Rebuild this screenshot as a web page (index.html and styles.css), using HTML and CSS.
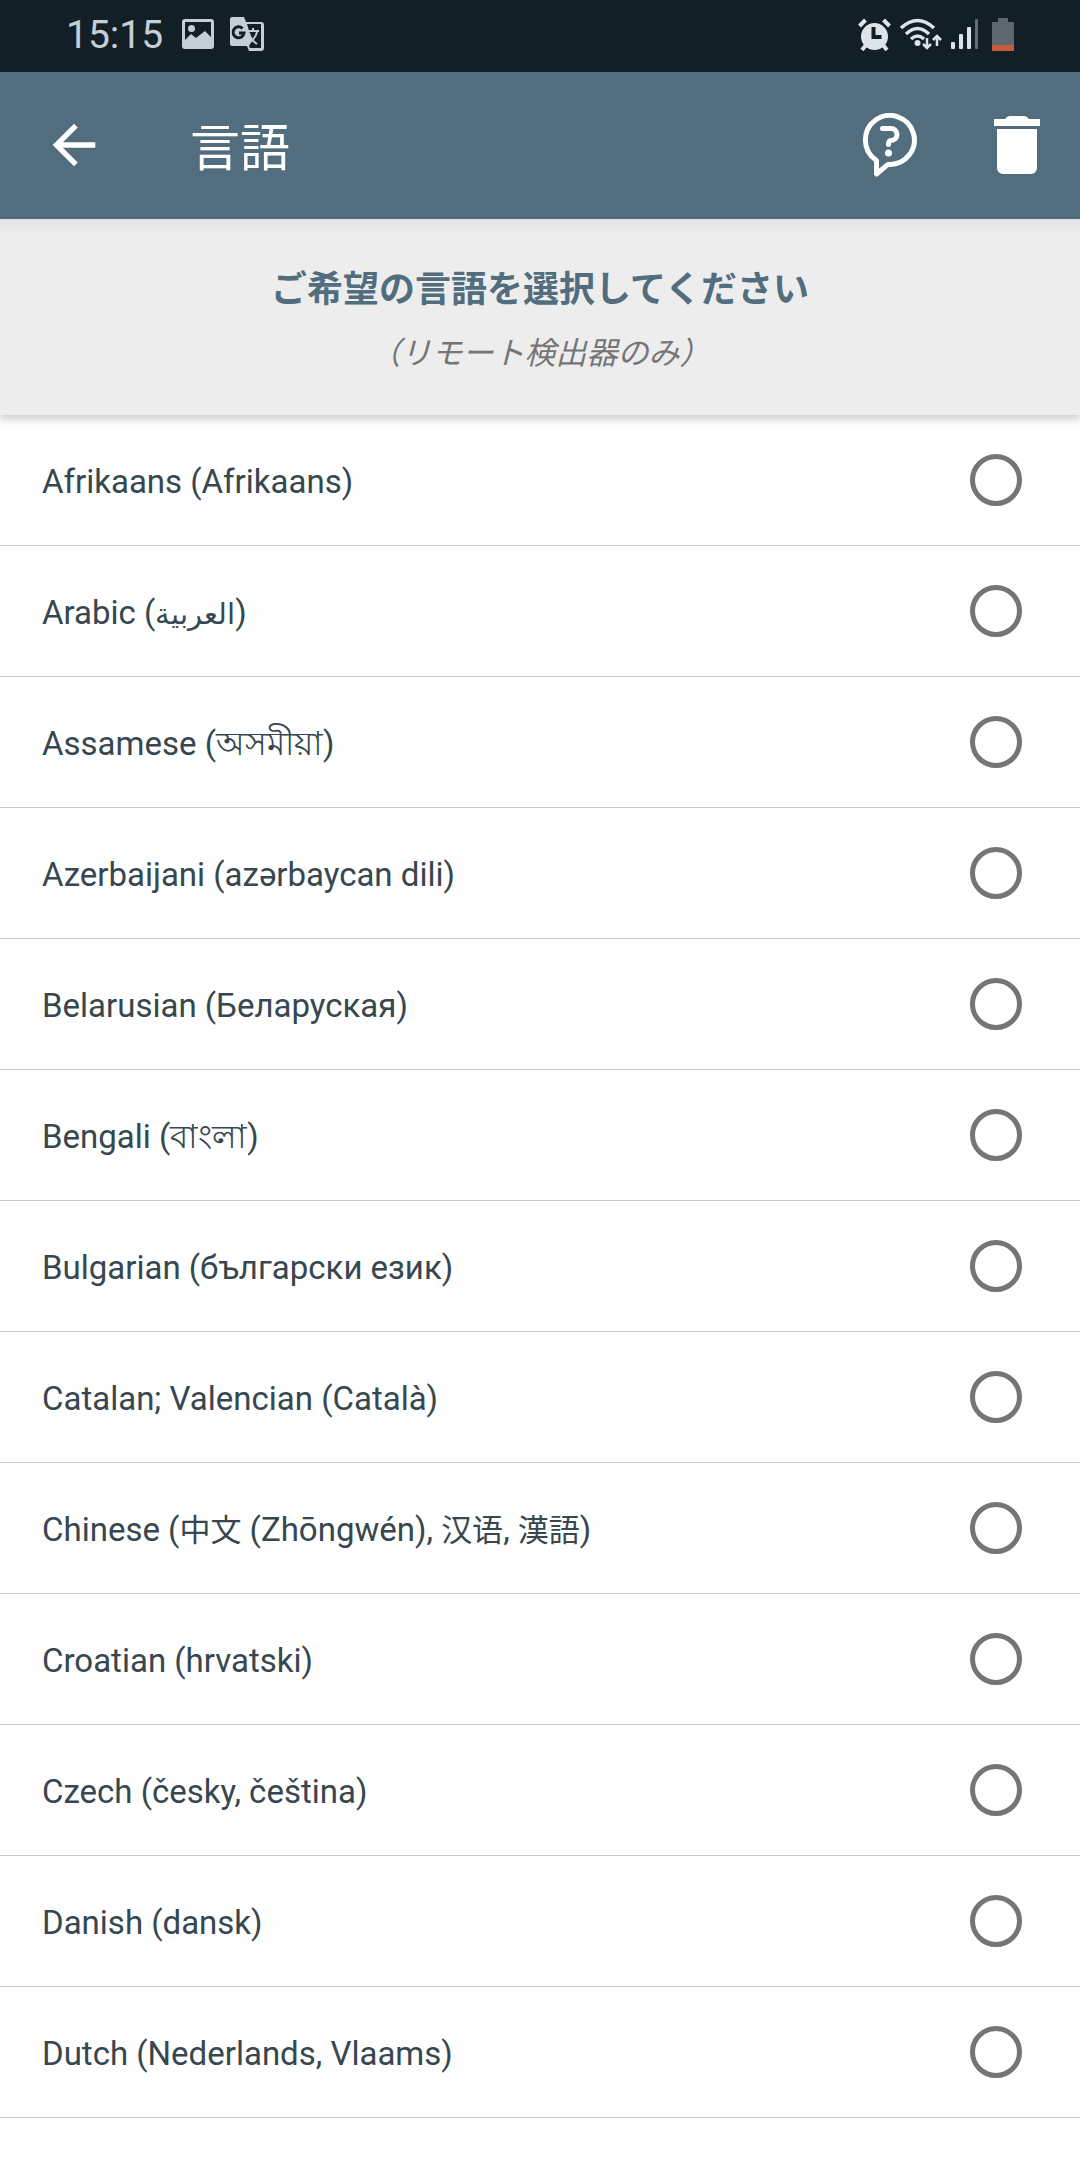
FILE: index.html
```html
<!doctype html>
<html lang="ja">
  <head>
    <meta charset="utf-8">
    <meta name="viewport" content="width=device-width, initial-scale=1">
    <title>言語</title>
    <link rel="stylesheet" href="styles.css">
  </head>
  <body>
    <div class="status-bar">
      <span class="status-time">15:15</span>
      <svg class="status-image" width="32" height="30" viewBox="0 0 32 30">
        <path fill-rule="evenodd" d="M3 0h26a3 3 0 0 1 3 3v24a3 3 0 0 1-3 3H3a3 3 0 0 1-3-3V3a3 3 0 0 1 3-3zM3 3v18l6-6 5 4 9-7 6 6V3z"/>
        <circle cx="9.500" cy="9.500" r="3.500"/>
      </svg>
      <svg class="status-translate" width="34" height="34" viewBox="0 0 34 34">
        <path d="M2 0h12l2 5h15a3 3 0 0 1 3 3v23a3 3 0 0 1-3 3H19l-2-5H2a2 2 0 0 1-2-2V2a2 2 0 0 1 2-2z"/>
        <path fill="#121f27" d="M17 7h14v24H20l-1-2 3-5z"/>
        <path fill="none" stroke="#121f27" stroke-width="3" d="M12.500 11.500a5.500 5.500 0 1 0 1.500 4.500H9"/>
        <path fill="none" stroke="#c6ced5" stroke-width="2" d="M17 14h12M23 11v3M19 16c1 5 5 9 8 11M27 15c-1 5-4 8-8 11"/>
      </svg>
      <div class="status-right">
        <svg width="33" height="33" viewBox="0 0 33 33">
          <circle cx="16.500" cy="18.500" r="13.500"/>
          <path fill="none" stroke="#dde3e8" stroke-width="4" d="M1.500 8l6-6M31.500 8l-6-6M8 27l-4 5M25 27l4 5"/>
          <path fill="none" stroke="#121f27" stroke-width="4" d="M15.500 9v10h8"/>
        </svg>
        <svg width="42" height="33" viewBox="0 0 42 33">
          <g fill="none" stroke="#dde3e8" stroke-width="3.500">
            <path d="M1 10Q17.500-5 34 10M6 16Q17.500 5 29 16M11 21Q17.500 15 24 21"/>
            <path stroke-width="2.500" d="M27 20v10M23 26l4 4 4-4M37 28V18M33 22l4-4 4 4"/>
          </g>
          <circle cx="17.500" cy="25" r="3"/>
        </svg>
        <svg width="28" height="30" viewBox="0 0 28 30">
          <rect x="0" y="23" width="4" height="7" rx="1"/>
          <rect x="8" y="15" width="4" height="15" rx="1"/>
          <rect x="16" y="8" width="4" height="22" rx="1"/>
          <rect x="24" y="0" width="3" height="30" rx="1" fill="#626d75"/>
        </svg>
        <svg class="battery" width="22" height="33" viewBox="0 0 22 33">
          <path fill="#5e6870" d="M6 0h10v4h5a1 1 0 0 1 1 1v22H0V5a1 1 0 0 1 1-1h5z"/>
          <path fill="#c95c38" d="M0 27h22v5a1 1 0 0 1-1 1H1a1 1 0 0 1-1-1z"/>
        </svg>
      </div>
    </div>

    <header class="app-bar">
      <button class="icon-button" type="button" aria-label="戻る">
        <svg width="64" height="64" viewBox="0 0 24 24">
          <path d="M20 11H7.830l5.590-5.590L12 4l-8 8 8 8 1.410-1.410L7.830 13H20z"/>
        </svg>
      </button>
      <h1 class="app-title">言語</h1>
      <button class="icon-button" type="button" aria-label="ヘルプ">
        <svg width="56" height="64" viewBox="0 0 56 64">
          <g fill="none" stroke="#fff" stroke-width="5" stroke-linecap="round" stroke-linejoin="round">
            <path d="M14.500 47.500A24.500 24.500 0 1 1 26 51.400L14.500 61z"/>
            <path d="M20.500 15.500H29a5.500 5.500 0 0 1 0 12c-2 0-2.500 1-2.500 4"/>
          </g>
          <circle cx="26.500" cy="40" r="3.500"/>
        </svg>
      </button>
      <button class="icon-button" type="button" aria-label="削除">
        <svg width="46" height="58" viewBox="0 0 46 58">
          <path d="M0 3h11q2-3 5-3h14q3 0 5 3h11v7H0zM3 13h40v39a6 6 0 0 1-6 6H9a6 6 0 0 1-6-6z"/>
        </svg>
      </button>
    </header>

    <section class="intro">
      <h2 class="intro-title">ご希望の言語を選択してください</h2>
      <p class="intro-note">（リモート検出器のみ）</p>
    </section>

    <main class="languages">
      <label class="language"><span class="language-name">Afrikaans (Afrikaans)</span><input type="radio" name="language" value="af"></label>
      <label class="language"><span class="language-name">Arabic (<bdi class="arabic" lang="ar">العربية</bdi>)</span><input type="radio" name="language" value="ar"></label>
      <label class="language"><span class="language-name">Assamese (অসমীয়া)</span><input type="radio" name="language" value="as"></label>
      <label class="language"><span class="language-name">Azerbaijani (azərbaycan dili)</span><input type="radio" name="language" value="az"></label>
      <label class="language"><span class="language-name">Belarusian (Беларуская)</span><input type="radio" name="language" value="be"></label>
      <label class="language"><span class="language-name">Bengali (বাংলা)</span><input type="radio" name="language" value="bn"></label>
      <label class="language"><span class="language-name">Bulgarian (български език)</span><input type="radio" name="language" value="bg"></label>
      <label class="language"><span class="language-name">Catalan; Valencian (Català)</span><input type="radio" name="language" value="ca"></label>
      <label class="language"><span class="language-name">Chinese (<span class="han">中文</span> (Zhōngwén), <span class="han" lang="zh-Hans">汉语</span>, <span class="han">漢語</span>)</span><input type="radio" name="language" value="zh"></label>
      <label class="language"><span class="language-name">Croatian (hrvatski)</span><input type="radio" name="language" value="hr"></label>
      <label class="language"><span class="language-name">Czech (česky, čeština)</span><input type="radio" name="language" value="cs"></label>
      <label class="language"><span class="language-name">Danish (dansk)</span><input type="radio" name="language" value="da"></label>
      <label class="language"><span class="language-name">Dutch (Nederlands, Vlaams)</span><input type="radio" name="language" value="nl"></label>
    </main>
  </body>
</html>
```
FILE: styles.css
```css
* {
  box-sizing: border-box;
}

body {
  margin: 0;
  background: #fefefe;
  color: #37474f;
  font-family: Roboto, "Noto Sans CJK JP", "Noto Sans", sans-serif;
}

svg {
  display: block;
  flex-shrink: 0;
}

.status-bar {
  display: flex;
  align-items: center;
  height: 72px;
  padding: 0 66px 4px;
  background: #121f27;
  color: #c6ced5;
}

.status-time {
  padding-top: 2px;
  margin-right: 19px;
  font-size: 39px;
  line-height: 48px;
}

.status-image,
.status-translate {
  fill: #c6ced5;
}

.status-translate {
  margin-left: 16px;
}

.status-right {
  display: flex;
  align-items: center;
  gap: 9px;
  margin-left: auto;
  fill: #dde3e8;
}

.battery {
  margin-left: 4px;
}

.app-bar {
  display: flex;
  align-items: center;
  height: 147px;
  padding: 0 40px 2px 42px;
  background: #526d7e;
  color: #fff;
}

.icon-button {
  padding: 0;
  border: 0;
  background: none;
  fill: #fff;
  cursor: pointer;
}

.icon-button + .icon-button {
  margin-left: 76px;
}

.app-title {
  flex: 1;
  margin: 0 0 0 84px;
  padding-top: 8px;
  font-size: 50px;
  font-weight: 400;
  line-height: 64px;
}

.intro {
  position: relative;
  padding: 47px 32px 37px;
  background: linear-gradient(#e0e2e3, #ededed 14px);
  box-shadow: 0 4px 8px rgba(0, 0, 0, 0.2);
  text-align: center;
}

.intro-title {
  margin: 0 0 16px;
  color: #526d7e;
  font-size: 36px;
  font-weight: 700;
  line-height: 48px;
}

.intro-note {
  margin: 0;
  color: #757575;
  font-size: 31px;
  font-style: italic;
  line-height: 48px;
}

.language {
  display: flex;
  align-items: center;
  justify-content: space-between;
  height: 131px;
  padding: 0 58px 0 42px;
  border-bottom: 1px solid #c8cacb;
  font-size: 33px;
  line-height: 48px;
  cursor: pointer;
}

.language-name {
  padding-top: 4px;
}

.han {
  font-size: 31px;
}

.arabic {
  font-size: 29px;
}

.language input {
  appearance: none;
  flex-shrink: 0;
  width: 52px;
  height: 52px;
  margin: 0;
  border: 5px solid #757575;
  border-radius: 50%;
}

.language input:checked {
  background: radial-gradient(#526d7e 50%, transparent 54%);
  border-color: #526d7e;
}
```
